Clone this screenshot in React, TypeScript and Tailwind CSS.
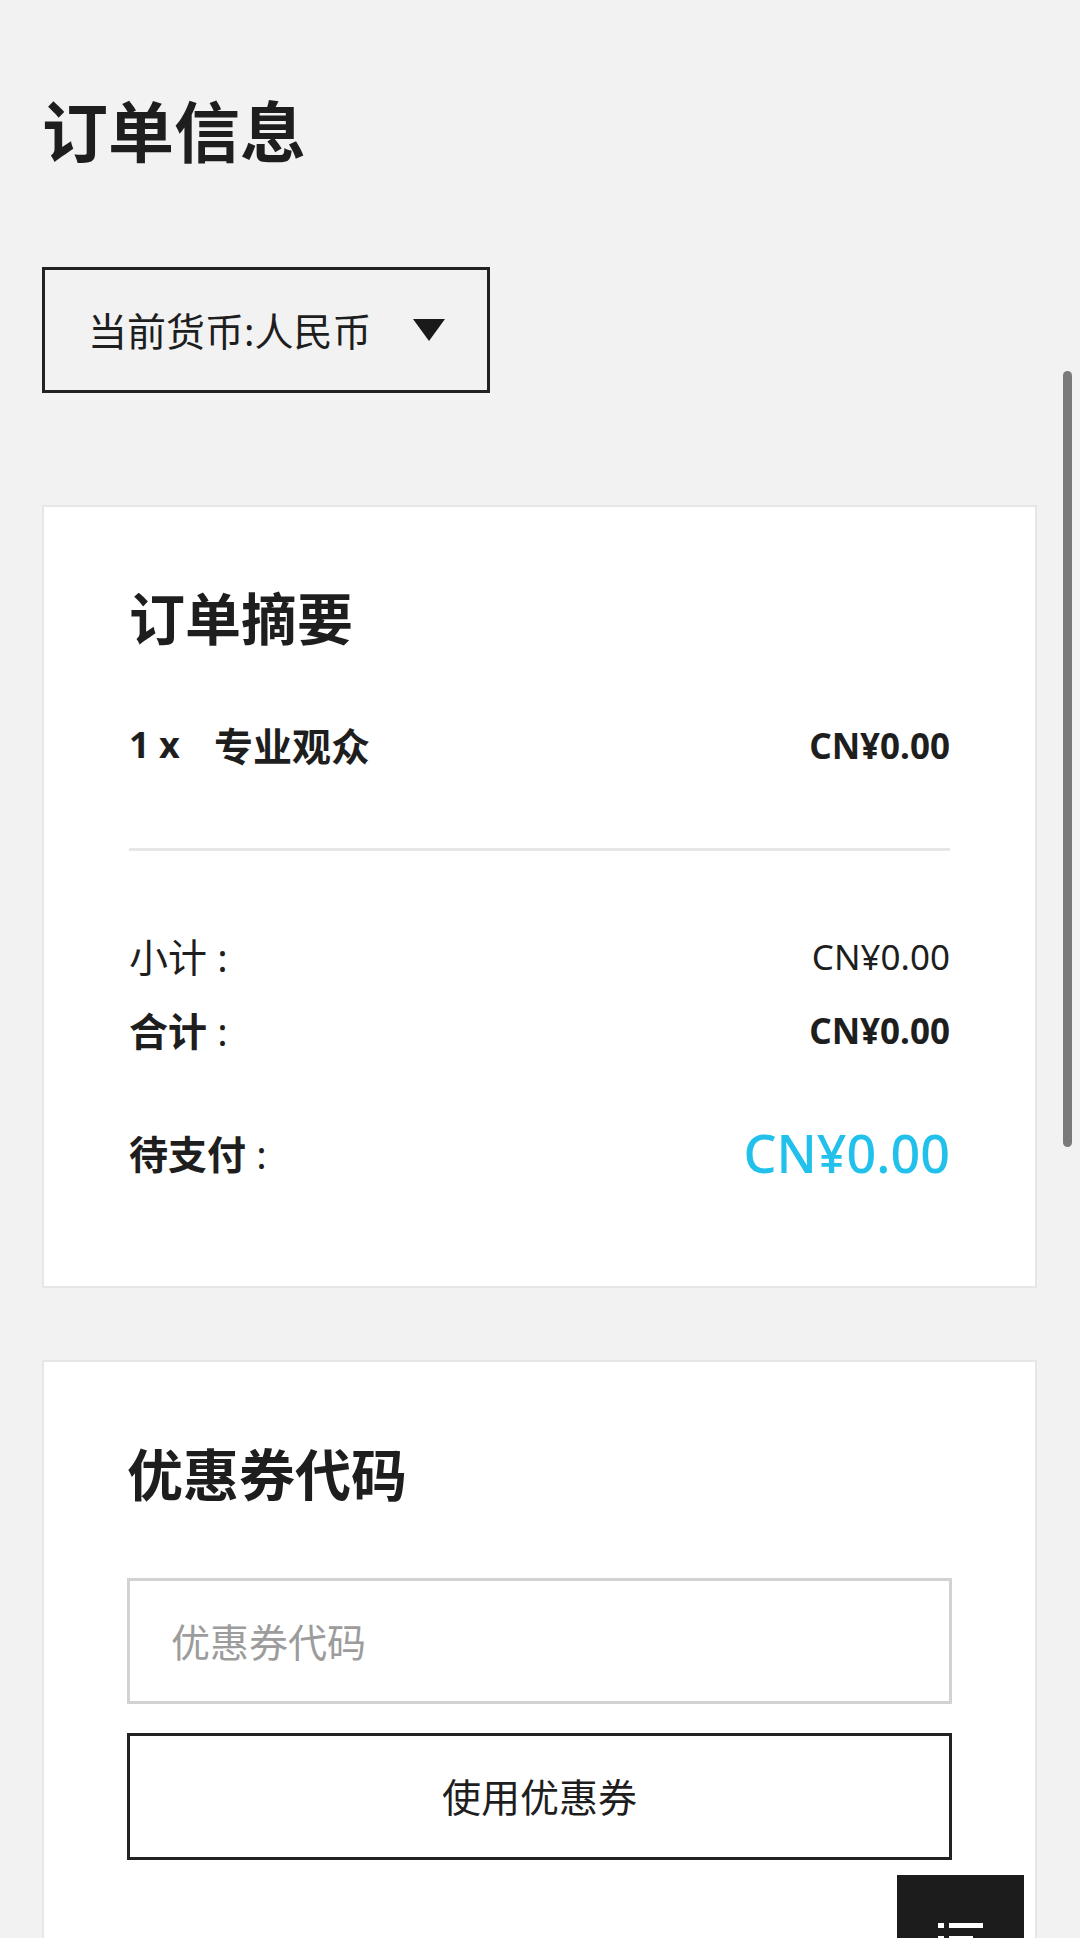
import React from 'react';

const Row = ({ label, value, bold, valueBold }: { label: string; value: string; bold?: boolean; valueBold?: boolean }) => (
  <div className="flex h-[56px] items-center justify-between leading-none text-[#1e1e1e]">
    <span className="text-[39px]">
      <span className={bold ? 'font-bold' : 'font-normal'}>{label}</span>
      <span className="font-normal"> :</span>
    </span>
    <span className={valueBold ? 'font-bold text-[35px]' : 'font-normal text-[35px]'}>{value}</span>
  </div>
);

export default function App() {
  return (
    <div className="relative h-[1938px] overflow-hidden bg-[#f2f2f2] font-['Noto_Sans','Noto_Sans_CJK_SC',sans-serif] text-[#1e1e1e]">
      <div className="pl-[42px] pr-[43px] pt-[98px]">
        <h1 className="h-[66px] text-[66px] font-bold leading-none">订单信息</h1>

        {/* currency select */}
        <div className="mt-[103px] flex h-[126px] w-[448px] items-center border-[3px] border-[#222] pl-[43px] pr-[42px]">
          <span className="flex-1 text-[39px] leading-none">当前货币:人民币</span>
          <svg width="32" height="22" viewBox="0 0 32 22">
            <polygon points="0,0 32,0 16,22" fill="#1a1a1a" />
          </svg>
        </div>

        {/* order summary */}
        <div className="mt-[112px] border-2 border-[#e6e6e6] bg-white px-[85px] pb-[101px] pt-[83px]">
          <h2 className="flex h-[56px] items-center text-[56px] font-bold leading-none">订单摘要</h2>

          <div className="mt-[71px] flex h-[56px] items-center justify-between font-bold leading-none">
            <div className="flex items-center text-[39px]">
              <span className="w-[85px] text-[36px]">1 x</span>
              <span>专业观众</span>
            </div>
            <span className="text-[35px]">CN¥0.00</span>
          </div>

          <div className="mt-[75px] h-[3px] bg-[#e6e6e6]" />

          <div className="mt-[77px]">
            <Row label="小计" value="CN¥0.00" />
          </div>
          <div className="mt-[18px]">
            <Row label="合计" value="CN¥0.00" bold valueBold />
          </div>

          <div className="mt-[63px] flex h-[64px] items-center justify-between leading-none">
            <span className="text-[39px]">
              <span className="font-bold">待支付</span>
              <span> :</span>
            </span>
            <span className="text-[52px] font-medium text-[#22c1ec]">CN¥0.00</span>
          </div>
        </div>

        {/* coupon */}
        <div className="mt-[72px] border-2 border-[#e6e6e6] bg-white px-[83px] pb-[120px] pt-[84px]">
          <h2 className="flex h-[56px] items-center text-[56px] font-bold leading-none">优惠券代码</h2>

          <input
            placeholder="优惠券代码"
            className="mt-[76px] block h-[126px] w-full border-[3px] border-[#d2d2d2] bg-white pl-[41px] text-[39px] leading-none outline-none placeholder:text-[#9c9c9c]"
          />

          <button className="mt-[29px] flex h-[127px] w-full items-center justify-center border-[3px] border-[#222] bg-white text-[39px] leading-none text-[#1e1e1e]">
            使用优惠券
          </button>
        </div>
      </div>

      {/* floating menu button */}
      <div className="absolute left-[897px] top-[1875px] flex h-[127px] w-[127px] items-center justify-center bg-[#1c1c1c]">
        <svg width="46" height="32" viewBox="0 0 46 32">
          <rect x="0" y="0" width="6" height="5" fill="#fff" />
          <rect x="11" y="0" width="34" height="5" fill="#fff" />
          <rect x="0" y="13" width="6" height="5" fill="#fff" />
          <rect x="11" y="13" width="24" height="5" fill="#fff" />
          <rect x="0" y="26" width="6" height="5" fill="#fff" />
          <rect x="11" y="26" width="34" height="5" fill="#fff" />
        </svg>
      </div>

      {/* scrollbar */}
      <div className="absolute left-[1063px] top-[371px] h-[776px] w-[9px] rounded-full bg-[#7a7a7a]" />
    </div>
  );
}
